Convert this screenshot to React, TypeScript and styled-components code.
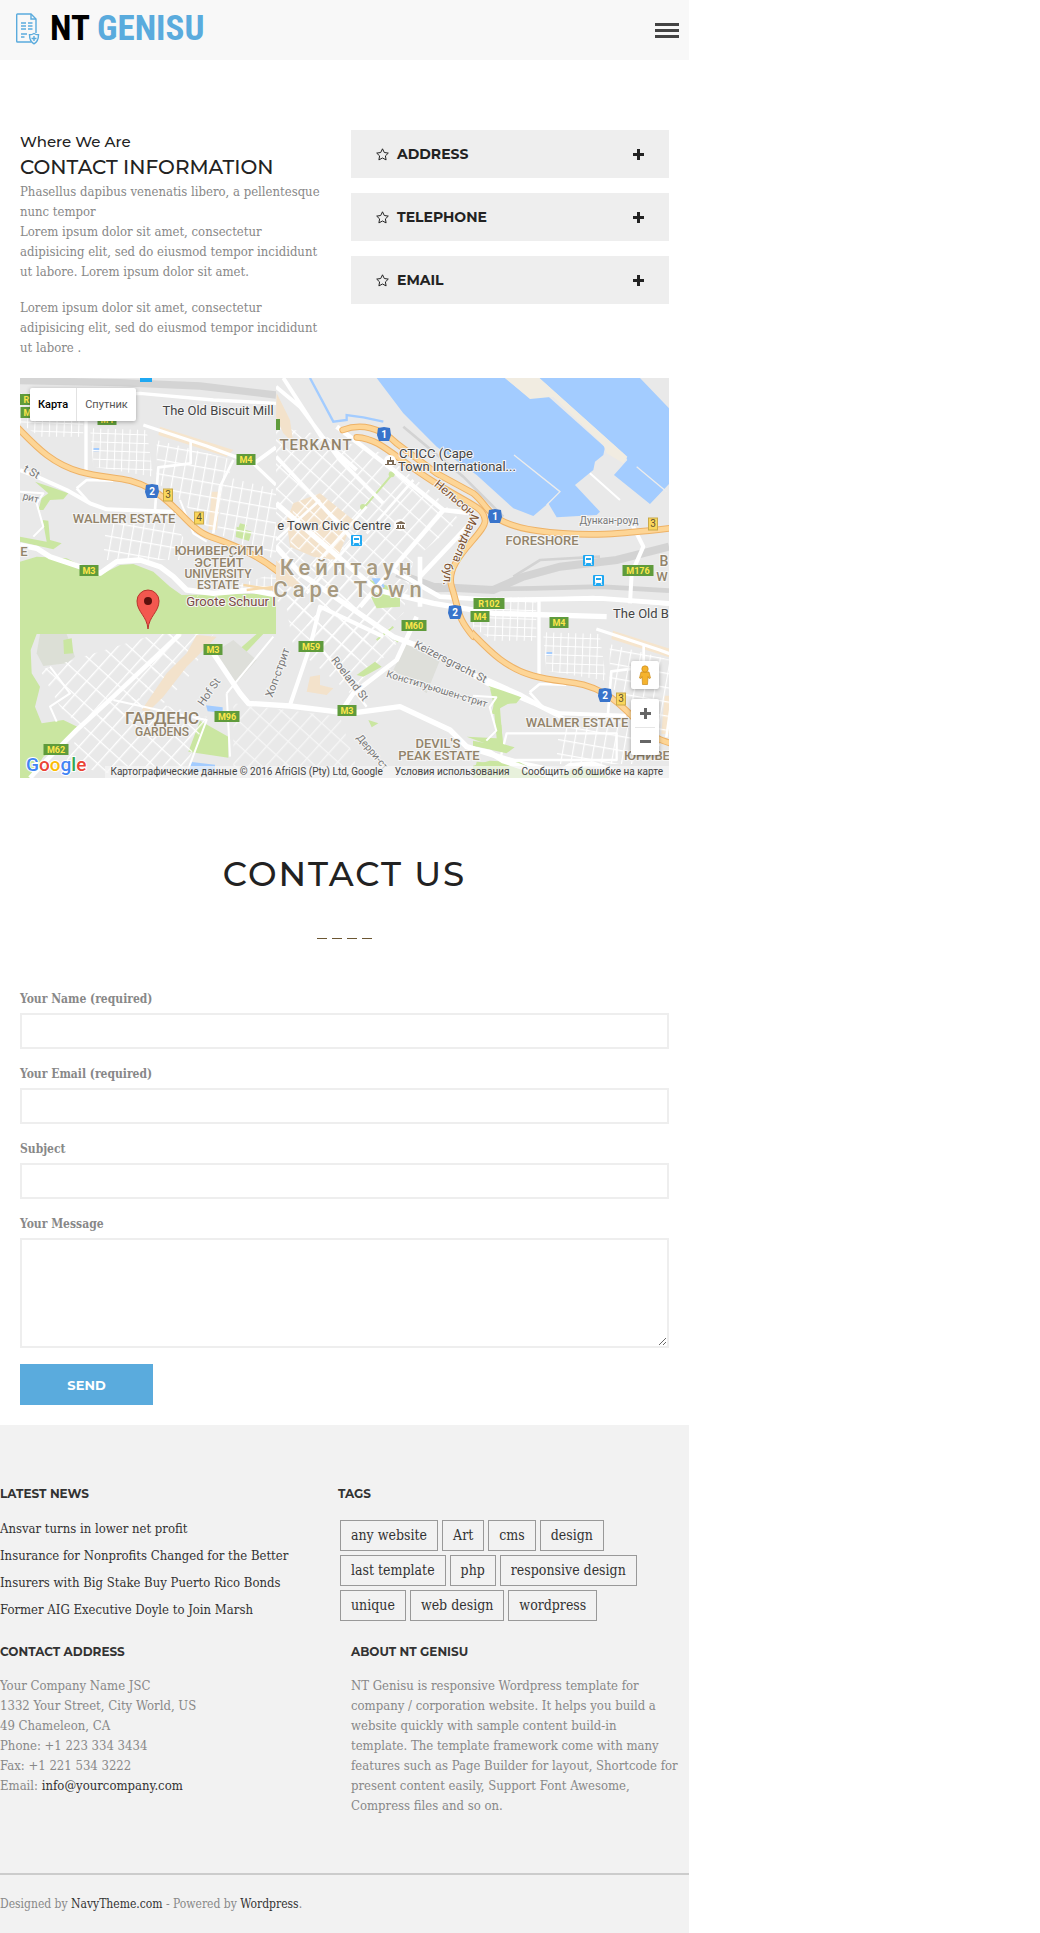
import React from "react";
import styled, { createGlobalStyle } from "styled-components";

const slab = `"Roboto Slab", "DejaVu Serif Condensed", "DejaVu Serif", serif`;
const display = `Montserrat, Inter, sans-serif`;
const blue = "#5aabdd";

const GlobalStyle = createGlobalStyle`
  *, *::before, *::after { box-sizing: border-box; }
  body { margin: 0; background: #fff; }
  h1, h2, h3, h4, p, ul, address { margin: 0; padding: 0; font-style: normal; }
  ul { list-style: none; }
  a { color: #333; text-decoration: none; }
  button { font: inherit; border: 0; cursor: pointer; padding: 0; }
`;

const Page = styled.div`
  max-width: 689px;
  font: 13px/20px ${slab};
  color: #888;
`;

/* Header */
const Header = styled.header`
  display: flex;
  align-items: center;
  justify-content: space-between;
  height: 60px;
  padding: 0 10px 0 16px;
  background: #f8f8f8;
`;
const Logo = styled.a`
  display: flex;
  align-items: center;
  gap: 10px;
  padding-bottom: 2px;
  font: 700 35px/40px "Roboto Condensed", Roboto, sans-serif;
  color: #000;
  span { color: ${blue}; }
`;
const MenuButton = styled.button`
  display: grid;
  gap: 3px;
  width: 24px;
  background: none;
  span { height: 3px; background: #444; }
`;

/* Intro */
const Main = styled.main`
  padding: 70px 20px 20px;
`;
const Intro = styled.section`
  display: grid;
  grid-template-columns: 313fr 318fr;
  column-gap: 18px;
  margin-bottom: 20px;
`;
const Lead = styled.h3`
  font: 500 15px/24px ${display};
  color: #222;
`;
const Title = styled.h2`
  margin-bottom: 2px;
  font: 500 20px/26px ${display};
  color: #222;
`;
const Copy = styled.p`
  & + & { margin-top: 16px; }
`;
const Accordion = styled.div`
  display: grid;
  align-content: start;
  gap: 15px;
`;
const AccordionItem = styled.button`
  display: flex;
  align-items: center;
  gap: 8px;
  height: 48px;
  padding: 0 25px;
  background: #eee;
  color: #222;
  font: 700 14px/20px ${display};
  span { flex: 1; text-align: left; }
`;

/* Map */
const MapFrame = styled.section`
  position: relative;
  height: 400px;
  overflow: hidden;
  font-family: Roboto, sans-serif;
  > svg { display: block; width: 100%; height: 100%; }
`;
const MapTypes = styled.div`
  position: absolute;
  top: 10px;
  left: 10px;
  display: flex;
  box-shadow: 0 1px 4px rgba(0, 0, 0, 0.3);
  border-radius: 2px;
  background: #fff;
`;
const MapType = styled.button<{ $active?: boolean }>`
  height: 33px;
  padding: 0 8px;
  background: none;
  font: ${p => (p.$active ? 500 : 400)} 11px/16px Roboto, sans-serif;
  color: ${p => (p.$active ? "#000" : "#565656")};
  & + & { border-left: 1px solid #e2e2e2; }
`;
const MapTools = styled.div`
  position: absolute;
  right: 10px;
  top: 283px;
  display: grid;
  gap: 10px;
`;
const ToolBox = styled.div`
  display: grid;
  justify-items: center;
  width: 28px;
  border-radius: 2px;
  background: #fff;
  box-shadow: 0 1px 4px rgba(0, 0, 0, 0.3);
`;
const Tool = styled.button`
  display: grid;
  place-items: center;
  width: 20px;
  height: 28px;
  background: none;
  & + & { border-top: 1px solid #e6e6e6; }
`;
const Attribution = styled.div`
  position: absolute;
  right: 0;
  bottom: 0;
  display: flex;
  gap: 12px;
  padding: 0 6px;
  background: rgba(245, 245, 245, 0.7);
  font: 10px/12px Roboto, sans-serif;
  color: #444;
  white-space: nowrap;
  a { color: #444; }
`;

/* Contact form */
const FormTitle = styled.h1`
  margin-top: 74px;
  text-align: center;
  font: 500 34px/44px ${display};
  letter-spacing: 2px;
  color: #222;
`;
const Dashes = styled.div`
  display: flex;
  justify-content: center;
  gap: 5px;
  margin: 42px 0 51px;
  span { width: 10px; height: 1px; background: #6b5632; }
`;
const Form = styled.form`
  display: grid;
  justify-items: start;
`;
const Field = styled.label`
  display: grid;
  gap: 4px;
  width: 100%;
  margin-bottom: 16px;
  font-size: 12px;
  font-weight: 700;
  line-height: 19px;
`;
const Input = styled.input`
  width: 100%;
  height: 36px;
  padding: 0 10px;
  border: 2px solid #eee;
  font: inherit;
`;
const TextArea = styled.textarea`
  display: block;
  width: 100%;
  height: 110px;
  padding: 10px;
  border: 2px solid #eee;
  font: inherit;
`;
const Send = styled.button`
  width: 133px;
  height: 41px;
  background: ${blue};
  color: #fff;
  font: 700 13px/20px ${display};
`;

/* Footer */
const Footer = styled.footer`
  padding-top: 59px;
  background: #f2f2f2;
`;
const FooterRow = styled.div<{ $cols: string }>`
  display: grid;
  grid-template-columns: ${p => p.$cols};
`;
const FooterTitle = styled.h4`
  margin-bottom: 14px;
  font: 700 12px/20px ${display};
  color: #333;
`;
const NewsList = styled.ul`
  display: grid;
  gap: 7px;
  padding: 1px 0 22px;
`;
const Tags = styled.div`
  display: flex;
  flex-wrap: wrap;
  gap: 4px;
  max-width: 320px;
  padding: 2px 0 0 2px;
`;
const Tag = styled.a`
  height: 31px;
  padding: 0 10px;
  border: 1px solid #999;
  font-size: 14px;
  line-height: 29px;
`;
const Legal = styled.p`
  margin-top: 57px;
  padding: 19px 0 19px;
  border-top: 2px solid #ccc;
  font-size: 12px;
`;

const LogoIcon = () => (
  <svg width="24" height="32" viewBox="0 0 24 32" fill="none" stroke={blue} strokeWidth="1.4">
    <path d="M15 29H1.5a.8.8 0 0 1-.8-.8V1.800a.8.8 0 0 1 .8-.8H15l5 5v14" />
    <path d="M15 1v5h5" />
    <path d="M5 10h5M12 10h4.500M5 13h5M12 13h4.500M5 16h5M12 16h4.500M5 21h6M5 24h3.500" />
    <path d="M18 20.500c-1.500 1-3 1.300-4.500 1.300 0 4 .5 7 4.500 9 4-2 4.500-5 4.500-9-1.500 0-3-.3-4.500-1.300z" fill="#f8f8f8" />
    <path d="M18 23v5M15.500 25.500h5" />
  </svg>
);
const Star = () => (
  <svg width="13" height="13" viewBox="0 0 13 13" fill="none" stroke="#222">
    <path d="M6.500 .8l1.800 3.700 4 .6-2.900 2.800.7 4-3.600-1.900-3.600 1.900.7-4L.7 5.100l4-.6z" />
  </svg>
);
const Plus = () => (
  <svg width="11" height="11" viewBox="0 0 11 11"><path d="M4 0h3v4h4v3H7v4H4V7H0V4h4z" fill="#222" /></svg>
);

/* Motorway: dark casing under a lighter core */
const Motorway = ({ d, w = 20 }: { d: string; w?: number }) => (
  <g fill="none" strokeLinejoin="round" strokeLinecap="round">
    <path d={d} stroke="#eeb266" strokeWidth={w} />
    <path d={d} stroke="#fdd596" strokeWidth={w - 6} />
  </g>
);

const TileArt = () => (
  <g>
    <path d="M60 605L110 590 200 595 240 615 300 645 360 615 400 612 460 635 510 680 545 705 828 700V822H60z" fill="#cae6a1" />
    <path d="M105 365L150 380 205 400 190 418 150 420 130 450 115 450 125 415 145 400zM60 530L140 545 128 480 145 482 150 540 185 550 160 568 60 545z" fill="#cae6a1" />
    <path d="M710 500l45 15-8 28-40-12zM720 490l20 5-5 15-20-6z" fill="#cae6a1" />
    <path d="M280 264h18v10h-18z" fill="#a3ccff" />
    <path d="M480 200L700 270 680 290 475 225zM635 395h28L650 510h-25z" fill="#f6e5cd" />
    <path d="M60 100H250V230H120L60 190zM270 205L440 210 460 350 280 320z" fill="url(#gridA)" />
    <path d="M470 240L700 300 640 520 520 400 470 370zM320 460L510 470 580 580 540 600H310z" fill="url(#gridB)" />
    <path d="M680 350L828 390V600L650 520z" fill="url(#gridB)" />
    <path d="M590 710L828 640V700H600z" fill="url(#gridA)" />
    <g fill="none" stroke="#fff" strokeLinejoin="round">
      <path d="M60 555L110 565 150 590 240 620 300 640 350 605 420 600 480 620 520 650 560 690 640 700 750 690 828 705" strokeWidth="16" />
      <path d="M180 110L420 100 640 120 828 130M258 105V340M430 195L620 258 760 310 828 375" strokeWidth="10" />
      <path d="M760 312L828 262M60 330L110 350 200 390 270 430 320 448 520 455" strokeWidth="12" />
      <path d="M572 245V310L475 322 465 450M700 300L660 380 640 520M230 385L260 360 340 362M230 385L270 430" strokeWidth="8" />
      <path d="M60 395L130 400 110 430 130 500 100 530M540 420L580 520 620 545" strokeWidth="6" />
    </g>
    <path d="M730 675L828 690M740 690L828 680" stroke="#f6d9ab" strokeWidth="7" />
    <Motorway d="M50 200C100 250 150 310 240 335S380 345 457 390 570 510 630 530 770 580 840 640" />
  </g>
);

const BaseArt = () => (
  <g>
    <path d="M60 822H110L92 870 95 940 120 980 105 1040 125 1090 190 1080 232 1100 190 1150 130 1190 90 1254H60z" fill="#cae6a1" />
    <path d="M120 822H200L225 890 200 910 130 918 110 880z" fill="#dcdfd6" />
    <path d="M190 840l25-5 5 45-28 2zM770 822h20L730 885l-15-15zM600 1082L685 1130V1193L565 1175z" fill="#cae6a1" />
    <path d="M640 880L700 840 770 900 700 980zM1220 850L1320 900 1280 1000 1180 930z" fill="#dedfda" />
    <path d="M120 930L470 822H560L380 1060 240 1100 180 1040z" fill="url(#gridC)" />
    <path d="M240 1110L400 1010 620 1070 550 1240H300L200 1200z" fill="url(#gridC)" />
    <path d="M500 822H640L560 960 480 1040 400 1060z" fill="url(#gridC)" />
    <path d="M700 1030L1020 1070 1080 1254H700z" fill="url(#gridC)" opacity=".6" />
    <path d="M590 825L650 830 560 920 490 1010 440 1060 425 1050 500 940 560 880z" fill="#f3e2cb" />
    <path d="M828 200L940 220 1150 280 1300 400 1380 480 1240 600 1210 760 1050 900 960 830 828 720z" fill="url(#gridC)" />
    <path d="M830 100L870 180 880 250 850 220 828 170zM880 430L960 400 1060 480 1010 600 940 590 870 560 860 480zM828 600l60 60 30 30-90-20z" fill="#f3e2cb" />
    <path d="M880 430L960 400 1060 480 1010 600 870 560z" fill="url(#gridD)" />
    <path d="M930 950L960 945 960 975 1000 985 980 1005 920 995z" fill="#f3e2cb" />
    <path d="M850 690L1050 640 1200 840 1050 1000 880 860z" fill="url(#gridC)" />
    <path d="M1110 660l90 30v50l-70 5-20-40z" fill="#cae6a1" />
    <path d="M1115 655h25l15 25-18 12zM575 1206l70 8v20h-80zM618 1036l50 6v16l-45-4z" fill="#a3ccff" />
    <path d="M1070 945L1125 905 1145 920 1090 950zM1105 1080l30 10-20 12z" fill="#cae6a1" />
    <path d="M1115 785l80 60M1130 840l50-40M1090 445l85-100" stroke="#cae6a1" strokeWidth="6" />
    <circle cx="1089" cy="441" r="9" fill="#cae6a1" /><circle cx="1175" cy="343" r="9" fill="#cae6a1" />
    <path d="M1130 54H1515L1590 115 1640 105 1815 262 1810 285 1785 305 1780 330 1725 375 1800 455 1790 465 1670 472 1645 430 1600 468 1540 445 1430 345 1310 260 1210 160z" fill="#a3ccff" />
    <path d="M1618 54H1920L2007 145V372L1950 432 1842 345 1882 300 1875 285z" fill="#a3ccff" />
    <path d="M1515 54H1618L1882 290 1870 310 1820 280 1810 255 1660 110 1590 117z" fill="#f1ece1" />
    <path d="M1542 285L1680 395 1640 435M1910 320L2000 395" stroke="#ececec" strokeWidth="4" fill="none" />
    <path d="M1770 340L1860 420" stroke="#fff" strokeWidth="6" fill="none" />
    <path d="M930 54L1000 185 1040 180 1040 165 1090 172 1150 185" stroke="#a3ccff" strokeWidth="7" fill="none" />
    <g fill="none" stroke="#d3d3d3">
      <path d="M1190 640L1300 680 1480 690 1570 650 1680 620 1850 600 2007 560" strokeWidth="24" />
      <path d="M1300 690L1600 685 1800 680 2007 692" strokeWidth="14" />
      <path d="M1540 650L1620 600 1800 590M1210 200L1390 350 1510 470" strokeWidth="8" />
    </g>
    <g fill="none" stroke="#fff" strokeLinejoin="round">
      <path d="M828 80L900 140 1020 300 1150 430M828 290L950 420 1060 540M850 54L970 240 1070 330" strokeWidth="12" />
      <path d="M1010 200L1180 330 1330 450 1420 460M1330 450L1080 740M1260 590V740M1420 480L1260 650" strokeWidth="14" />
      <path d="M828 560L900 640 1180 830 1260 860M828 430L1130 690 1300 730 1480 760 1820 770" strokeWidth="16" />
      <path d="M1180 630L1320 710 1480 720 1800 715 2007 730M1250 770L1190 900 1060 1000 1020 1060" strokeWidth="14" />
      <path d="M1060 540L920 700M1100 440L940 620M1240 360L1100 520M960 420L828 540" strokeWidth="8" />
      <path d="M640 880L720 1000 745 1030 870 1038 1050 1060 1200 1040 1350 1110 1400 1160 1560 1210 1700 1240" strokeWidth="16" />
      <path d="M1150 830L960 740 930 860 870 1035M1240 850L1460 970 1600 1030 1700 1080" strokeWidth="12" />
      <path d="M540 822L340 1010 230 1110 130 1210 90 1254" strokeWidth="14" />
      <path d="M150 920L210 1000 150 1040 170 1085M680 1000L690 1190M340 1020L520 1060 620 1080 560 1240M820 830L680 1000" strokeWidth="6" />
      <path d="M1890 480L1930 560 1895 640 1890 730" strokeWidth="12" />
      <path d="M960 860L1100 1040M1520 1120H1850V1200H1500z" strokeWidth="7" />
    </g>
    <path d="M1470 985L1555 1015 1500 1045 1510 1170 1400 1130 1490 1135 1480 1030zM1430 1205l60 5v44h-70z" fill="#cae6a1" />
    <Motorway d="M1028 210C1080 190 1140 200 1190 250L1310 340 1420 400C1470 440 1460 490 1610 512S1880 520 2010 505" />
    <Motorway d="M1070 232C1140 235 1180 290 1300 365S1450 440 1455 480 1330 600 1355 680 1370 770 1420 830" />
  </g>
);

type LabelProps = { x: number; y: number; s?: number; fill?: string; w?: number; r?: number; ls?: number; children: React.ReactNode };
const Label = ({ x, y, s = 13, fill = "#444", w = 400, r = 0, ls = 0, children }: LabelProps) => (
  <text x={x} y={y} fontSize={s} fontWeight={w} fill={fill} letterSpacing={ls} stroke="#f5f5f5" strokeWidth="2"
    paintOrder="stroke" textAnchor="middle" transform={r ? `rotate(${r} ${x} ${y})` : undefined}>{children}</text>
);
const district = "#92836a";

const Route = ({ x, y, children, kind = "m" }: { x: number; y: number; children: string; kind?: "m" | "n" | "y" }) => {
  const w = kind === "m" ? children.length * 6 + 7 : kind === "n" ? 14 : 9;
  return (
    <g>
      {kind === "n"
        ? <path d={`M${x - 6} ${y - 6}L${x} ${y - 7}L${x + 6} ${y - 6}L${x + 7} ${y + 1}L${x + 5} ${y + 7}H${x - 5}L${x - 7} ${y + 1}z`} fill="#3874cb" />
        : <rect x={x - w / 2} y={y - 5} width={w} height={kind === "m" ? 11 : 12} fill={kind === "m" ? "#5f9b3c" : "#f9d65c"} stroke={kind === "y" ? "#c9a94a" : "none"} />}
      <text x={x} y={y + 4} fontSize={kind === "m" ? 9 : 10} fontWeight={kind === "y" ? 400 : 700} textAnchor="middle"
        fill={kind === "m" ? "#fde74c" : kind === "n" ? "#fff" : "#5e5230"}>{children}</text>
    </g>
  );
};
const Train = ({ x, y }: { x: number; y: number }) => (
  <g transform={`translate(${x - 5} ${y - 5})`}>
    <rect width="11" height="11" rx="1" fill="#1fa8f2" />
    <rect x="2" y="1" width="7" height="7" rx="1" fill="#fff" />
    <path d="M3 3h5v2H3z" fill="#1fa8f2" /><path d="M3 8l-1 2M8 8l1 2" stroke="#fff" />
  </g>
);

const MapArt = () => (
  <svg viewBox="0 0 649 400" preserveAspectRatio="xMidYMid slice" role="img" aria-label="Cape Town">
    <defs>
      <pattern id="gridA" width="22" height="26" patternUnits="userSpaceOnUse" patternTransform="rotate(2)"><path d="M0 0H22M0 0V26" stroke="#fff" strokeWidth="6" /></pattern>
      <pattern id="gridB" width="30" height="42" patternUnits="userSpaceOnUse" patternTransform="rotate(10)"><path d="M0 0H30M0 0V42" stroke="#fff" strokeWidth="7" /></pattern>
      <pattern id="gridC" width="38" height="54" patternUnits="userSpaceOnUse" patternTransform="rotate(42)"><path d="M0 0H38M0 0V54" stroke="#fff" strokeWidth="8" /></pattern>
      <pattern id="gridD" width="36" height="36" patternUnits="userSpaceOnUse" patternTransform="rotate(42)"><path d="M0 0H36M0 0V36" stroke="#fff" strokeWidth="8" /></pattern>
      <clipPath id="tile"><path d="M60 54H828V822H60z" /></clipPath>
    </defs>
    <rect width="649" height="400" fill="#e9e9e9" />
    <g transform="scale(.33333) translate(-60 -54)">
      <BaseArt />
      <g transform="translate(1359 612)"><g clipPath="url(#tile)"><TileArt /></g></g>
      <path d="M60 54H828V822H60z" fill="#e9e9e9" />
      <g clipPath="url(#tile)">
        <TileArt />
        <path d="M60 62L360 68 600 78 828 105" fill="none" stroke="#d4d4d4" strokeWidth="22" />
      </g>
    </g>
    <rect y="0" x="120" width="12" height="4" fill="#1fa8f2" />
    <rect y="41" x="256" width="4" height="11" fill="#5f9b3c" />
    <Label x={296} y={72} s={15} w={500} fill={district} ls={1}>TERKANT</Label>
    <Label x={314} y={152}>e Town Civic Centre</Label>
    <Label x={328} y={197} s={22} w={500} fill="#a79a80" ls={5}>Кейптаун</Label>
    <Label x={330} y={219} s={22} w={500} fill="#a79a80" ls={5}>Cape Town</Label>
    <Label x={198} y={37}>The Old Biscuit Mill</Label>
    <Label x={211} y={228} fill="#7a4b43">Groote Schuur I</Label>
    <Label x={104} y={145} fill={district} w={500}>WALMER ESTATE</Label>
    <Label x={199} y={177} fill={district} w={500}>ЮНИВЕРСИТИ</Label>
    <Label x={199} y={189} fill={district} w={500}>ЭСТЕЙТ</Label>
    <Label x={198} y={200} s={12} fill={district} w={500}>UNIVERSITY</Label>
    <Label x={198} y={211} s={12} fill={district} w={500}>ESTATE</Label>
    <Label x={4} y={178} fill={district} w={500}>E</Label>
    <Label x={142} y={346} s={17} fill={district} w={500}>ГАРДЕНС</Label>
    <Label x={142} y={358} s={12} fill={district} w={500}>GARDENS</Label>
    <Label x={418} y={370} fill={district} w={500}>DEVIL'S</Label>
    <Label x={419} y={382} fill={district} w={500}>PEAK ESTATE</Label>
    <Label x={557} y={349} fill={district} w={500}>WALMER ESTATE</Label>
    <Label x={522} y={167} fill={district} w={500}>FORESHORE</Label>
    <Label x={644} y={188} s={14} fill={district} w={500}>B</Label>
    <Label x={642} y={203} fill={district} w={500}>W</Label>
    <Label x={627} y={382} fill={district} w={500}>ЮНИВЕ</Label>
    <Label x={416} y={80}>CTICC (Cape</Label>
    <Label x={437} y={93}>Town International...</Label>
    <Label x={621} y={240}>The Old B</Label>
    <Label x={10} y={97} s={11} fill="#777" r={30}>t St</Label>
    <Label x={10} y={123} s={10} fill="#777" r={15}>рит</Label>
    <Label x={192} y={316} s={11} fill="#777" r={-55}>Hof St</Label>
    <Label x={261} y={296} s={11} fill="#777" r={-70}>Хоп-стрит</Label>
    <Label x={327} y={303} s={11} fill="#777" r={52}>Roeland St</Label>
    <Label x={429} y={287} s={11} fill="#777" r={27}>Keizersgracht St</Label>
    <Label x={416} y={314} s={10} fill="#777" r={17}>Конституьюшен-стрит</Label>
    <Label x={350} y={376} s={10} fill="#777" r={50}>Дерри-ст</Label>
    <Label x={589} y={146} s={10} fill="#777">Дункан-роуд</Label>
    <Label x={432} y={123} s={12} fill="#7d5230" r={40}>Нельсон</Label>
    <Label x={442} y={159} s={12} fill="#7d5230" r={112}>Мандела</Label>
    <Label x={424} y={196} s={12} fill="#7d5230" r={94}>бул.</Label>
    <Route x={9} y={21}>R1</Route><Route x={10} y={34}>M4</Route><Route x={87} y={41}>M4</Route>
    <Route x={226} y={81}>M4</Route><Route x={69} y={192}>M3</Route><Route x={193} y={271}>M3</Route>
    <Route x={291} y={268}>M59</Route><Route x={207} y={338}>M96</Route><Route x={36} y={371}>M62</Route>
    <Route x={327} y={332}>M3</Route><Route x={394} y={247}>M60</Route><Route x={469} y={225}>R102</Route>
    <Route x={460} y={238}>M4</Route><Route x={539} y={244}>M4</Route><Route x={618} y={192}>M176</Route>
    <Route kind="n" x={132} y={113}>2</Route><Route kind="n" x={364} y={56}>1</Route>
    <Route kind="n" x={475} y={138}>1</Route><Route kind="n" x={435} y={234}>2</Route><Route kind="n" x={585} y={317}>2</Route>
    <Route kind="y" x={148} y={116}>3</Route><Route kind="y" x={179} y={139}>4</Route>
    <Route kind="y" x={633} y={145}>3</Route><Route kind="y" x={601} y={320}>3</Route>
    <Train x={336} y={162} /><Train x={568} y={182} /><Train x={578} y={202} />
    <g fill="#fff"><circle cx="370" cy="83" r="6" /><circle cx="380" cy="147" r="6" /></g>
    <path d="M367 86v-4h7v4h-2v-2h-3v2zM370 79h1v3h-1zM365 86h11v1h-11zM376 150h9v1h-9zM376 146h9v-1l-4-2-5 2zM377 147h2v3h-2zM380 147h1v3h-1zM382 147h2v3h-2z" fill="#7d6b56" />
    <path d="M128 251c-1-13-11-17-11-28a11 11 0 0 1 22 0c0 11-10 15-11 28z" fill="#f3584f" stroke="#b8332c" />
    <circle cx="128" cy="223" r="4" fill="#5c110d" />
    <text x="6" y="393" fontSize="19" fontWeight="500" fill="#4285f4" stroke="#fff" strokeWidth="2" paintOrder="stroke">
      G<tspan fill="#ea4335">o</tspan><tspan fill="#fbbc05">o</tspan><tspan>g</tspan><tspan fill="#34a853">l</tspan><tspan fill="#ea4335">e</tspan>
    </text>
  </svg>
);

const tags = ["any website", "Art", "cms", "design", "last template", "php", "responsive design", "unique", "web design", "wordpress"];
const news = [
  "Ansvar turns in lower net profit",
  "Insurance for Nonprofits Changed for the Better",
  "Insurers with Big Stake Buy Puerto Rico Bonds",
  "Former AIG Executive Doyle to Join Marsh",
];

export default function App() {
  return (
    <Page>
      <GlobalStyle />
      <Header>
        <Logo href="#"><LogoIcon /><div>NT <span>GENISU</span></div></Logo>
        <MenuButton aria-label="Menu"><span /><span /><span /></MenuButton>
      </Header>
      <Main>
        <Intro>
          <div>
            <Lead>Where We Are</Lead>
            <Title>CONTACT INFORMATION</Title>
            <Copy>
              Phasellus dapibus venenatis libero, a pellentesque<br />nunc tempor<br />
              Lorem ipsum dolor sit amet, consectetur<br />adipisicing elit, sed do eiusmod tempor incididunt<br />
              ut labore. Lorem ipsum dolor sit amet.
            </Copy>
            <Copy>
              Lorem ipsum dolor sit amet, consectetur<br />adipisicing elit, sed do eiusmod tempor incididunt<br />ut labore .
            </Copy>
          </div>
          <Accordion>
            {["ADDRESS", "TELEPHONE", "EMAIL"].map(name => (
              <AccordionItem key={name} type="button" aria-expanded={false}><Star /><span>{name}</span><Plus /></AccordionItem>
            ))}
          </Accordion>
        </Intro>
        <MapFrame>
          <MapArt />
          <MapTypes>
            <MapType $active>Карта</MapType>
            <MapType>Спутник</MapType>
          </MapTypes>
          <MapTools>
            <ToolBox>
              <Tool aria-label="Street View">
                <svg width="12" height="20" viewBox="0 0 12 20" fill="#f5b32d" stroke="#c98a1a" strokeWidth=".7">
                  <path d="M2 7h8l1.500 6-1.500.5-1-2-.5 8H3.500l-.5-8-1 2L.5 13z" /><circle cx="6" cy="4" r="3.200" />
                </svg>
              </Tool>
            </ToolBox>
            <ToolBox>
              <Tool aria-label="Zoom in"><svg width="11" height="11"><path d="M4 0h3v4h4v3H7v4H4V7H0V4h4z" fill="#666" /></svg></Tool>
              <Tool aria-label="Zoom out"><svg width="11" height="3"><path d="M0 0h11v3H0z" fill="#666" /></svg></Tool>
            </ToolBox>
          </MapTools>
          <Attribution>
            <span>Картографические данные © 2016 AfriGIS (Pty) Ltd, Google</span>
            <a href="#">Условия использования</a>
            <a href="#">Сообщить об ошибке на карте</a>
          </Attribution>
        </MapFrame>
        <FormTitle>CONTACT US</FormTitle>
        <Dashes><span /><span /><span /><span /></Dashes>
        <Form>
          <Field>Your Name (required)<Input type="text" /></Field>
          <Field>Your Email (required)<Input type="email" /></Field>
          <Field>Subject<Input type="text" /></Field>
          <Field>Your Message<TextArea /></Field>
          <Send type="button">SEND</Send>
        </Form>
      </Main>
      <Footer>
        <FooterRow $cols="338fr 351fr">
          <div>
            <FooterTitle>LATEST NEWS</FooterTitle>
            <NewsList>{news.map(n => <li key={n}><a href="#">{n}</a></li>)}</NewsList>
          </div>
          <div>
            <FooterTitle>TAGS</FooterTitle>
            <Tags>{tags.map(t => <Tag key={t} href="#">{t}</Tag>)}</Tags>
          </div>
        </FooterRow>
        <FooterRow $cols="351fr 338fr">
          <div>
            <FooterTitle>CONTACT ADDRESS</FooterTitle>
            <address>
              Your Company Name JSC<br />1332 Your Street, City World, US<br />49 Chameleon, CA<br />
              Phone: +1 223 334 3434<br />Fax: +1 221 534 3222<br />Email: <a href="#">info@yourcompany.com</a>
            </address>
          </div>
          <div>
            <FooterTitle>ABOUT NT GENISU</FooterTitle>
            <p>
              NT Genisu is responsive Wordpress template for<br />company / corporation website. It helps you build a<br />
              website quickly with sample content build-in<br />template. The template framework come with many<br />
              features such as Page Builder for layout, Shortcode for<br />present content easily, Support Font Awesome,<br />
              Compress files and so on.
            </p>
          </div>
        </FooterRow>
        <Legal>Designed by <a href="#">NavyTheme.com</a> - Powered by <a href="#">Wordpress</a>.</Legal>
      </Footer>
    </Page>
  );
}
